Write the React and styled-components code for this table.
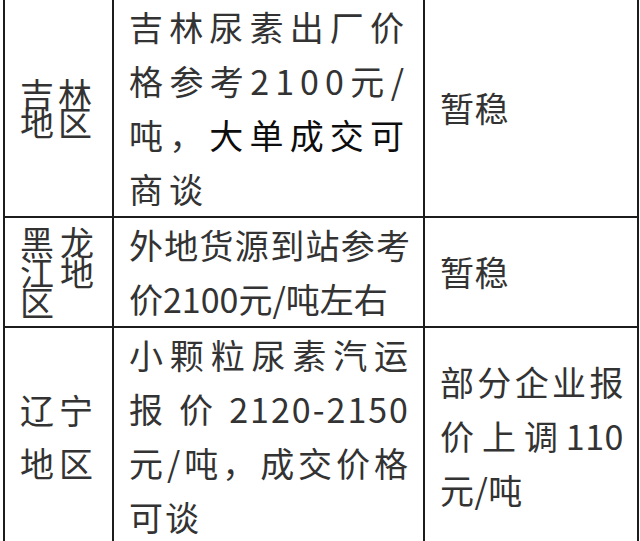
import React from 'react';
import styled, { createGlobalStyle } from 'styled-components';

const GlobalStyle = createGlobalStyle`
  html, body {
    margin: 0;
    background: #ffffff;
  }
`;

const Page = styled.div`
  width: 640px;
  height: 541px;
  overflow: hidden;
  padding-left: 3px;
  box-sizing: border-box;
`;

const Table = styled.table`
  border-collapse: collapse;
  table-layout: fixed;
  width: 634px;
  margin-top: -2px;
  font-family: "Noto Sans CJK SC", "Noto Sans", sans-serif;
  font-size: 34px;
  color: #333;
`;

const Cell = styled.td`
  border: 2px solid #1c1c1c;
  padding: 0 13px 0 15px;
  vertical-align: middle;
  line-height: 54px;
  text-align: justify;
  letter-spacing: ${(p) => p.$ls || 0}px;
`;

const RegionCell = styled(Cell)`
  text-align: left;
  white-space: nowrap;
  overflow: visible;
  line-height: ${(p) => p.$lh}px;
`;

const Strong = styled.span`
  color: #0d0d0d;
`;

const rows = [
  {
    region: ['吉林', '地区'],
    regionLh: 28,
    regionLs: 4,
    price: (
      <>
        吉林尿素出厂价格参考2100元/吨，<Strong>大单成交可</Strong>商谈
      </>
    ),
    priceLs: 6,
    trend: '暂稳',
  },
  {
    region: ['黑龙', '江地', '区'],
    regionLh: 30,
    regionLs: 6,
    price: '外地货源到站参考价2100元/吨左右',
    priceLs: 0,
    trend: '暂稳',
  },
  {
    region: ['辽宁', '地区'],
    regionLh: 53,
    regionLs: 5,
    price: '小颗粒尿素汽运报价2120-2150元/吨，成交价格可谈',
    priceLs: 2,
    trend: '部分企业报价上调110元/吨',
  },
];

export default function App() {
  return (
    <Page>
      <GlobalStyle />
      <Table>
        <colgroup>
          <col style={{ width: 109 }} />
          <col style={{ width: 311 }} />
          <col style={{ width: 214 }} />
        </colgroup>
        <tbody>
          {rows.map((r, i) => (
            <tr key={i}>
              <RegionCell $lh={r.regionLh} $ls={r.regionLs}>
                {r.region.map((line, j) => (
                  <React.Fragment key={j}>
                    {j > 0 && <br />}
                    {line}
                  </React.Fragment>
                ))}
              </RegionCell>
              <Cell $ls={r.priceLs}>{r.price}</Cell>
              <Cell $ls={0.5}>{r.trend}</Cell>
            </tr>
          ))}
        </tbody>
      </Table>
    </Page>
  );
}
